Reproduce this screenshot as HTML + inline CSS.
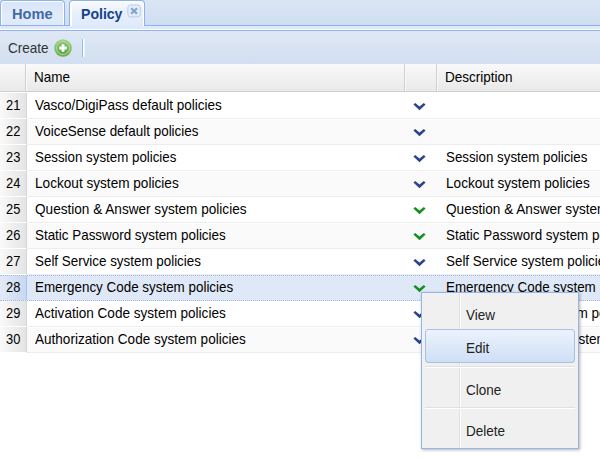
<!DOCTYPE html>
<html><head><meta charset="utf-8">
<style>
*{box-sizing:border-box;margin:0;padding:0}
html,body{width:600px;height:458px;overflow:hidden;background:#fff}
body{font-family:"Liberation Sans",sans-serif;font-size:14.3px;color:#000;position:relative}
.abs{position:absolute}
.t{position:absolute;line-height:16px;white-space:nowrap;transform-origin:0 0;transform:scaleX(.945)}
#strip{left:0;top:0;width:600px;height:26px;background:linear-gradient(#dbe6f5,#cfddf1)}
#spacer{left:0;top:25px;width:600px;height:6px;background:#deeafb;border-top:1px solid #8db2e3;border-bottom:1px solid #8db2e3;box-shadow:inset 0 -1px 0 #fff}
.tab{top:0;height:26px;border:1px solid #8db2e3;border-bottom:none;border-radius:4px 4px 0 0;background:linear-gradient(#d7e4f7,#e0ebfb 55%,#deeafb);font-weight:bold;font-size:14px;color:#416aa3;box-shadow:inset 1px 1px 0 #fff, inset -1px 0 0 #fff}
#tab1{left:0;width:65px;height:25px}
#tab2{left:69px;width:76px;background:linear-gradient(#f8fbff,#e8f0fc 45%,#deeafb);box-shadow:inset 2px 1px 0 #fff, inset -1px 0 0 #fff;color:#15428b;height:26px}
#tb{left:0;top:31px;width:600px;height:33px;background:linear-gradient(#dfe8f5,#d2dff0)}
#hd{left:0;top:64px;width:600px;height:28px;background:linear-gradient(#f9f9f9,#e9e9e9);border-bottom:1px solid #d0d0d0}
.hsep{top:64px;width:2px;height:27px;border-left:1px solid #d0d0d0;border-right:1px solid #fafafa}
.row{left:0;width:600px;height:26px;border-top:1px solid #fff;border-bottom:1px solid #ededed;background:#fff}
.row.alt{background:#fafafa}
.row.sel{background:#dfe8f6;border:1px dotted #a3bae9;border-left:none;border-right:none}
.num{left:0;top:-1px;width:27px;height:26px;background:linear-gradient(90deg,#f9f9f9,#e4e4e4);border-right:1px solid #d6d6d6;border-bottom:1px solid #fff}
.sel .num{top:0;height:24px;background:linear-gradient(90deg,#e2eaf7,#c9d8ef);border-right:1px solid #a9c4ec;border-bottom:none}
.row .t{top:3px}
.n{left:6px;transform:scaleX(.9)}.a{left:35px}.d{left:446px}
.row svg{position:absolute;left:413px;top:9px}
#menu{left:421px;top:292px;width:158px;height:157px;background:#f0f0f0;border:1px solid #94b6e6;box-shadow:1px 1px 3px rgba(0,0,0,.3)}
#gut{left:0;top:0;width:38px;height:155px;background:#f0f0f0;border-right:1px solid #e0e0e0;box-shadow:1px 0 0 #fff}
.mi{left:44px;color:#222}
.msep{left:3px;width:150px;height:2px;border-top:1px solid #e0e0e0;border-bottom:1px solid #fff}
#hl{left:3px;top:36px;width:150px;height:34px;border:1px solid #a9c0e8;border-radius:3px;background:linear-gradient(#ebf3fd,#cfdff5)}
</style></head><body>
<div id="strip" class="abs"></div>
<div id="spacer" class="abs"></div>
<div id="tab1" class="abs tab"><span class="t" style="left:11px;top:5px;transform:scaleX(1.045)">Home</span></div>
<div id="tab2" class="abs tab"><span class="t" style="left:11px;top:5px;transform:scaleX(1.005)">Policy</span>
<svg class="abs" style="left:57px;top:3px" width="14" height="14" viewBox="0 0 14 14"><rect x="0.8" y="0.9" width="12.6" height="12" rx="3" fill="#e3ecf9" stroke="#b9cfee" stroke-width="1"/><path d="M4.2 4.2l5.8 5.6M10 4.2l-5.8 5.6" stroke="#86a2cf" stroke-width="2.2"/></svg>
</div>
<div id="tb" class="abs">
<span class="t" id="create" style="left:8px;top:9px;color:#333">Create</span>
<svg class="abs" style="left:54px;top:8px" width="18" height="18" viewBox="0 0 18 18"><defs><linearGradient id="g1" x1="0" y1="0" x2="0" y2="1"><stop offset="0" stop-color="#a2d38c"/><stop offset="1" stop-color="#68ad4f"/></linearGradient><linearGradient id="g2" x1="0" y1="0" x2="0" y2="1"><stop offset="0" stop-color="#88c570"/><stop offset="1" stop-color="#58a342"/></linearGradient></defs><circle cx="9" cy="9" r="8.8" fill="url(#g1)"/><circle cx="9" cy="9" r="6.4" fill="url(#g2)" stroke="#c6e3b7" stroke-width="0.8"/><path d="M9 5.2v7.6M5.2 9h7.6" stroke="#fff" stroke-width="2.8"/></svg>
<div class="abs" style="left:82px;top:8px;width:2px;height:18px;border-left:1px solid #8fbdf5;border-right:1px solid #fff;box-shadow:1px 0 0 rgba(255,255,255,.55)"></div>
</div>
<div id="hd" class="abs">
<span class="t" id="hname" style="left:34px;top:5px">Name</span>
<span class="t" id="hdesc" style="left:445px;top:5px">Description</span>
</div>
<div class="abs hsep" style="left:25px"></div>
<div class="abs hsep" style="left:404px"></div>
<div class="abs hsep" style="left:436px"></div>
<div class="abs row" style="top:93px"><div class="abs num"></div><span class="t n">21</span><span class="t a" style="transform:scaleX(0.945)">Vasco/DigiPass default policies</span><svg width="13" height="8" viewBox="0 0 13 8"><path d="M0.4 1.6L2.2 0L6.5 3.5L10.8 0L12.6 1.6L6.5 7.3z" fill="#2b4293"/></svg><span class="t d" style="transform:scaleX(0.945)"></span></div>
<div class="abs row alt" style="top:119px"><div class="abs num"></div><span class="t n">22</span><span class="t a" style="transform:scaleX(0.9392)">VoiceSense default policies</span><svg width="13" height="8" viewBox="0 0 13 8"><path d="M0.4 1.6L2.2 0L6.5 3.5L10.8 0L12.6 1.6L6.5 7.3z" fill="#2b4293"/></svg><span class="t d" style="transform:scaleX(0.9392)"></span></div>
<div class="abs row" style="top:145px"><div class="abs num"></div><span class="t n">23</span><span class="t a" style="transform:scaleX(0.9317)">Session system policies</span><svg width="13" height="8" viewBox="0 0 13 8"><path d="M0.4 1.6L2.2 0L6.5 3.5L10.8 0L12.6 1.6L6.5 7.3z" fill="#2b4293"/></svg><span class="t d" style="transform:scaleX(0.9317)">Session system policies</span></div>
<div class="abs row alt" style="top:171px"><div class="abs num"></div><span class="t n">24</span><span class="t a" style="transform:scaleX(0.9517)">Lockout system policies</span><svg width="13" height="8" viewBox="0 0 13 8"><path d="M0.4 1.6L2.2 0L6.5 3.5L10.8 0L12.6 1.6L6.5 7.3z" fill="#2b4293"/></svg><span class="t d" style="transform:scaleX(0.9517)">Lockout system policies</span></div>
<div class="abs row" style="top:197px"><div class="abs num"></div><span class="t n">25</span><span class="t a" style="transform:scaleX(0.9507)">Question &amp; Answer system policies</span><svg width="13" height="8" viewBox="0 0 13 8"><path d="M0.4 1.6L2.2 0L6.5 3.5L10.8 0L12.6 1.6L6.5 7.3z" fill="#12911e"/></svg><span class="t d" style="transform:scaleX(0.9507)">Question &amp; Answer system policies</span></div>
<div class="abs row alt" style="top:223px"><div class="abs num"></div><span class="t n">26</span><span class="t a" style="transform:scaleX(0.9376)">Static Password system policies</span><svg width="13" height="8" viewBox="0 0 13 8"><path d="M0.4 1.6L2.2 0L6.5 3.5L10.8 0L12.6 1.6L6.5 7.3z" fill="#12911e"/></svg><span class="t d" style="transform:scaleX(0.9376)">Static Password system policies</span></div>
<div class="abs row" style="top:249px"><div class="abs num"></div><span class="t n">27</span><span class="t a" style="transform:scaleX(0.9365)">Self Service system policies</span><svg width="13" height="8" viewBox="0 0 13 8"><path d="M0.4 1.6L2.2 0L6.5 3.5L10.8 0L12.6 1.6L6.5 7.3z" fill="#2b4293"/></svg><span class="t d" style="transform:scaleX(0.9365)">Self Service system policies</span></div>
<div class="abs row alt sel" style="top:275px"><div class="abs num"></div><span class="t n">28</span><span class="t a" style="transform:scaleX(0.9378)">Emergency Code system policies</span><svg width="13" height="8" viewBox="0 0 13 8"><path d="M0.4 1.6L2.2 0L6.5 3.5L10.8 0L12.6 1.6L6.5 7.3z" fill="#12911e"/></svg><span class="t d" style="transform:scaleX(0.9378)">Emergency Code system policies</span></div>
<div class="abs row" style="top:301px"><div class="abs num"></div><span class="t n">29</span><span class="t a" style="transform:scaleX(0.9488)">Activation Code system policies</span><svg width="13" height="8" viewBox="0 0 13 8"><path d="M0.4 1.6L2.2 0L6.5 3.5L10.8 0L12.6 1.6L6.5 7.3z" fill="#2b4293"/></svg><span class="t d" style="transform:scaleX(0.9488)">Activation Code system policies</span></div>
<div class="abs row alt" style="top:327px"><div class="abs num"></div><span class="t n">30</span><span class="t a" style="transform:scaleX(0.9473)">Authorization Code system policies</span><svg width="13" height="8" viewBox="0 0 13 8"><path d="M0.4 1.6L2.2 0L6.5 3.5L10.8 0L12.6 1.6L6.5 7.3z" fill="#2b4293"/></svg><span class="t d" style="transform:scaleX(0.9473)">Authorization Code system policies</span></div>

<div id="menu" class="abs">
<div id="gut" class="abs"></div>
<div id="hl" class="abs"></div>
<div class="abs msep" style="top:73px"></div>
<div class="abs msep" style="top:114px"></div>
<span class="t mi" style="top:14px">View</span>
<span class="t mi" style="top:47px">Edit</span>
<span class="t mi" style="top:89px">Clone</span>
<span class="t mi" style="top:130px">Delete</span>
</div>
</body></html>
